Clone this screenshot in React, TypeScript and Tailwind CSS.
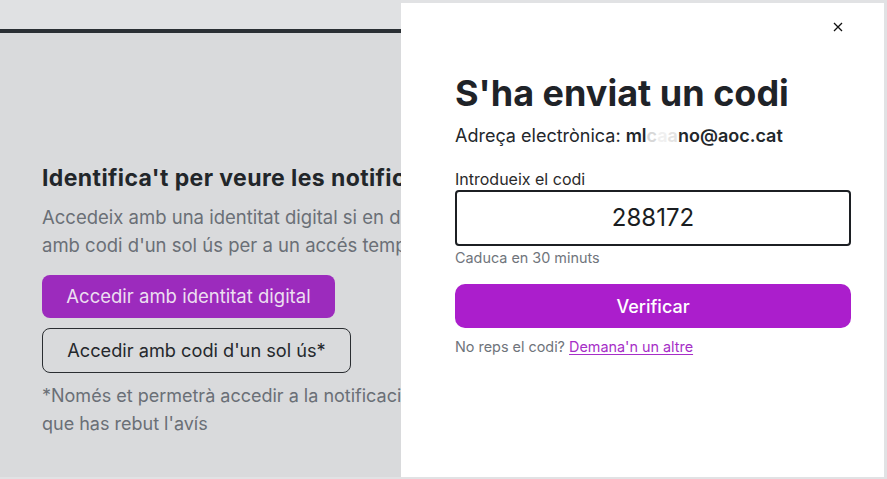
import React from "react";

export default function App() {
  return (
    <div
      className="relative w-[887px] h-[479px] bg-[#e1e2e4] overflow-hidden flex"
      style={{ fontFamily: "Inter, 'Noto Sans', sans-serif" }}
    >
      {/* Left page under overlay */}
      <div className="w-[401px] h-[477px] flex flex-col overflow-hidden shrink-0">
        <div className="h-[29px] bg-[#e0e1e3] shrink-0" />
        <div className="h-[4px] bg-[#2a2f34] shrink-0" />
        <div className="flex-1 bg-[#d9dadc] pl-[42px] pt-[132px]">
          <div className="w-[560px]">
            <h2 className="text-[23px] leading-[26px] font-bold tracking-[0.4px] text-[#22262a] whitespace-nowrap">
              Identifica't per veure les notificacions
            </h2>
            <p className="mt-[12px] text-[18.5px] leading-[28px] text-[#6a6f76] whitespace-nowrap">
              Accedeix amb una identitat digital si en disposes o
              <br />
              amb codi d'un sol ús per a un accés temporal
            </p>
            <div className="mt-[16px] flex flex-col items-start gap-[10px]">
              <button className="h-[43px] w-[293px] rounded-[8px] bg-[#9c2bbd] text-[18.5px] text-[#ecdff0]">
                Accedir amb identitat digital
              </button>
              <button className="h-[45px] w-[309px] rounded-[8px] border border-[#2a2d31] text-[18.2px] text-[#25282c]">
                Accedir amb codi d'un sol ús*
              </button>
            </div>
            <p className="mt-[9px] text-[18px] leading-[28px] text-[#6a6f76] whitespace-nowrap">
              *Només et permetrà accedir a la notificació de la qual
              <br />
              que has rebut l'avís
            </p>
          </div>
        </div>
      </div>

      {/* Dialog panel */}
      <div className="mt-[3px] w-[483px] h-[474px] bg-white relative pl-[54px] pr-[33px] pt-[67px] shrink-0">
        <button className="absolute right-[40px] top-[18px] w-[12px] h-[12px] flex items-center justify-center">
          <svg width="10" height="10" viewBox="0 0 10 10" fill="none" stroke="#111" strokeWidth="1.3">
            <path d="M1 1L9 9M9 1L1 9" />
          </svg>
        </button>
        <h1 className="text-[36px] leading-[46px] font-bold text-[#1f2328]">
          S'ha enviat un codi
        </h1>
        <p className="mt-[7px] text-[18px] leading-[26px] text-[#23272b]">
          Adreça electrònica:{" "}
          <span className="font-semibold">
            ml
            <span className="text-[#d8d8d8]">c</span>
            <span className="text-[#f0f0f0]">a</span>
            <span className="text-[#e4e4e4]">a</span>
            no@aoc.cat
          </span>
        </p>
        <label className="block mt-[21px] text-[16px] leading-[19px] text-[#2a2a2a]">
          Introdueix el codi
        </label>
        <div className="mt-[1px] h-[56px] w-[396px] rounded-[4px] border-2 border-[#1c1f23] flex items-center justify-center text-[24px] text-[#1a1d21]">
          288172
        </div>
        <p className="mt-[2px] text-[14.4px] leading-[20px] text-[#70757c]">Caduca en 30 minuts</p>
        <button className="mt-[16px] h-[44px] w-[396px] rounded-[10px] bg-[#ab1ecc] text-[18px] font-medium text-white">
          Verificar
        </button>
        <p className="mt-[9px] text-[14.4px] leading-[20px] text-[#6f747b]">
          No reps el codi?{" "}
          <a className="text-[#a62ec7] underline underline-offset-2">Demana'n un altre</a>
        </p>
      </div>
    </div>
  );
}
